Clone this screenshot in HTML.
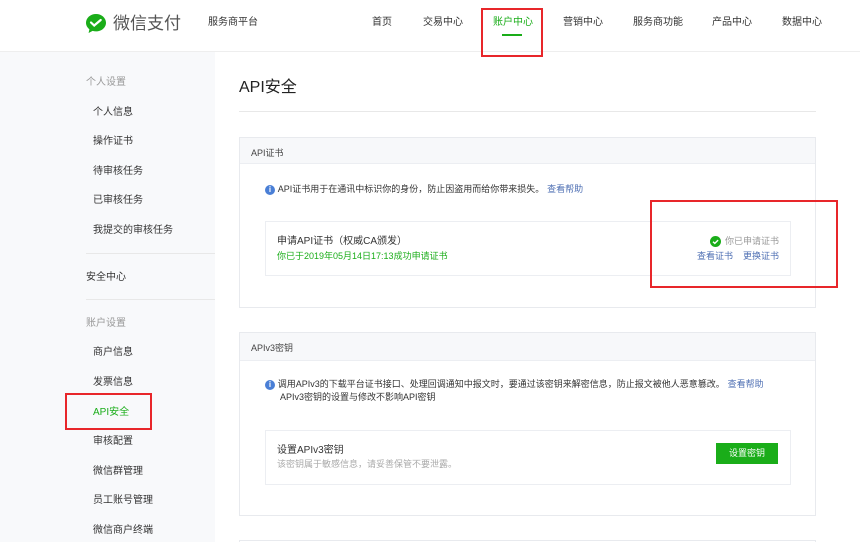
<!DOCTYPE html>
<html style="overflow:hidden;width:860px;height:542px"><head><meta charset="utf-8"><style>
*{margin:0;padding:0;box-sizing:border-box}
body{width:860px;height:542px;overflow:hidden;background:#fff;font-family:"Liberation Sans","Noto Sans CJK SC",sans-serif;font-size:10px;color:#333;position:relative}
.a{position:absolute;white-space:nowrap;line-height:1}
.side{position:absolute;left:0;top:52px;width:215px;height:490px;background:#f8f9fb}
.hl{position:absolute;height:1px;background:#e8e8e8}
.card{position:absolute;left:239px;width:577px;border:1px solid #e8eaee;background:#fff}
.ch{height:26px;background:#f7f8fa;border-bottom:1px solid #eceef2;padding:8px 11px;font-size:9px;color:#444}
.inner{position:absolute;left:25px;width:526px;border:1px solid #eceef2}
.info{display:inline-block;width:10px;height:10px;border-radius:50%;background:#4a7fd6;color:#fff;font-size:8px;text-align:center;line-height:10px;font-weight:bold}
.g{color:#1aad19}.b{color:#4e6fb3}.gr{color:#999}
.red{position:absolute;border:2px solid #e8262a}
</style></head><body>
<div class="hl" style="left:0;top:51px;width:860px;background:#eee"></div>
<svg class="a" style="left:84px;top:12px" width="24" height="24" viewBox="0 0 24 24"><path d="M12 2C6.5 2 2 5.9 2 10.7c0 2.6 1.3 4.9 3.4 6.5L4.6 21l4-2.1c1.1.3 2.2.5 3.4.5 5.5 0 10-3.9 10-8.7S17.5 2 12 2z" fill="#1aad19"/><path d="M7 10.5l3.2 3 6.5-5.5" stroke="#fff" stroke-width="2.2" fill="none" stroke-linecap="round"/></svg>
<div class="a" style="left:113px;top:15px;font-size:17px;color:#555">微信支付</div>
<div class="a" style="left:208px;top:18px;font-size:10px">服务商平台</div>
<div class="a" style="left:372px;top:18px">首页</div>
<div class="a" style="left:423px;top:18px">交易中心</div>
<div class="a g" style="left:493px;top:18px">账户中心</div>
<div class="a" style="left:502px;top:34px;width:20px;height:2px;background:#1aad19"></div>
<div class="a" style="left:563px;top:18px">营销中心</div>
<div class="a" style="left:633px;top:18px">服务商功能</div>
<div class="a" style="left:712px;top:18px">产品中心</div>
<div class="a" style="left:782px;top:18px">数据中心</div>
<div class="red" style="left:481px;top:8px;width:62px;height:49px"></div>

<div class="side"></div>
<div class="a gr" style="left:86px;top:78px">个人设置</div>
<div class="a" style="left:93px;top:108px">个人信息</div>
<div class="a" style="left:93px;top:137px">操作证书</div>
<div class="a" style="left:93px;top:167px">待审核任务</div>
<div class="a" style="left:93px;top:196px">已审核任务</div>
<div class="a" style="left:93px;top:226px">我提交的审核任务</div>
<div class="hl" style="left:86px;top:253px;width:129px"></div>
<div class="a" style="left:86px;top:273px">安全中心</div>
<div class="hl" style="left:86px;top:299px;width:129px"></div>
<div class="a gr" style="left:86px;top:319px">账户设置</div>
<div class="a" style="left:93px;top:348px">商户信息</div>
<div class="a" style="left:93px;top:378px">发票信息</div>
<div class="a g" style="left:93px;top:408px">API安全</div>
<div class="red" style="left:65px;top:393px;width:87px;height:37px"></div>
<div class="a" style="left:93px;top:437px">审核配置</div>
<div class="a" style="left:93px;top:467px">微信群管理</div>
<div class="a" style="left:93px;top:496px">员工账号管理</div>
<div class="a" style="left:93px;top:526px">微信商户终端</div>

<div class="a" style="left:239px;top:80px;font-size:16px;color:#222">API安全</div>
<div class="hl" style="left:239px;top:111px;width:577px"></div>

<div class="card" style="top:137px;height:171px">
<div class="ch">API证书</div>
<div class="a" style="left:25px;top:47px"><span class="info">i</span> <span style="font-size:9px">API证书用于在通讯中标识你的身份，防止因盗用而给你带来损失。</span> <span class="b" style="font-size:9px">查看帮助</span></div>
<div class="inner" style="top:83px;height:55px">
<div class="a" style="left:11px;top:15px">申请API证书（权威CA颁发）</div>
<div class="a g" style="left:11px;top:30px;font-size:9px">你已于2019年05月14日17:13成功申请证书</div>
<svg class="a" style="left:444px;top:14px" width="11" height="11" viewBox="0 0 11 11"><circle cx="5.5" cy="5.5" r="5.5" fill="#1aad19"/><path d="M3 5.7l1.8 1.7 3.3-3.3" stroke="#fff" stroke-width="1.4" fill="none"/></svg>
<div class="a gr" style="left:459px;top:15px;font-size:9px">你已申请证书</div>
<div class="a b" style="left:431px;top:30px;font-size:9px">查看证书</div>
<div class="a b" style="left:477px;top:30px;font-size:9px">更换证书</div>
</div>
</div>
<div class="red" style="left:650px;top:200px;width:188px;height:88px"></div>

<div class="card" style="top:332px;height:184px">
<div class="ch" style="height:28px">APIv3密钥</div>
<div class="a" style="left:25px;top:47px"><span class="info">i</span> <span style="font-size:9px">调用APIv3的下载平台证书接口、处理回调通知中报文时，要通过该密钥来解密信息，防止报文被他人恶意篡改。</span> <span class="b" style="font-size:9px">查看帮助</span></div>
<div class="a" style="left:40px;top:60px;font-size:9px">APIv3密钥的设置与修改不影响API密钥</div>
<div class="inner" style="top:97px;height:55px">
<div class="a" style="left:11px;top:15px">设置APIv3密钥</div>
<div class="a gr" style="left:11px;top:29px;font-size:9px;color:#aaa">该密钥属于敏感信息，请妥善保管不要泄露。</div>
<div class="a" style="left:450px;top:12px;width:62px;height:21px;background:#1aad19;color:#fff;font-size:9px;text-align:center;line-height:21px">设置密钥</div>
</div>
</div>
<div class="a" style="left:239px;top:540px;width:577px;height:2px;border-top:1px solid #e8eaee;border-left:1px solid #e8eaee;border-right:1px solid #e8eaee"></div>
</body></html>
